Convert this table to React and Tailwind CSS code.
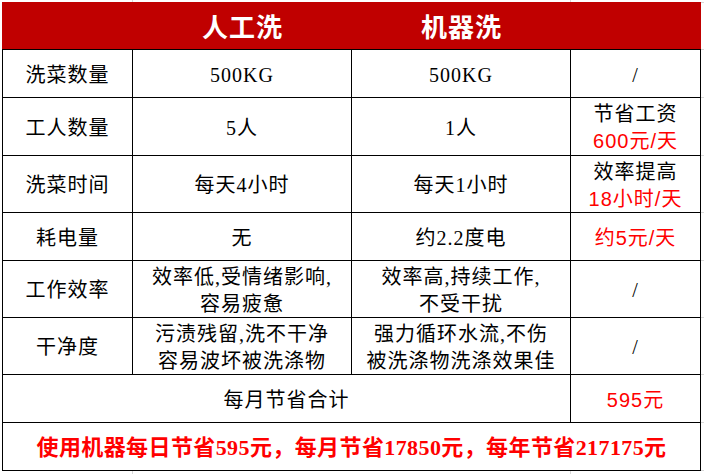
const serif = "font-['Liberation_Serif','Noto_Sans_CJK_SC',serif]";
const sans = "font-['Liberation_Sans','Noto_Sans_CJK_SC',sans-serif]";

const rows = [
  { h: "h-[48px]", label: "洗菜数量", manual: ["500KG"], machine: ["500KG"], save: [{ t: "/" }] },
  { h: "h-[58px]", label: "工人数量", manual: ["5人"], machine: ["1人"], save: [{ t: "节省工资" }, { t: "600元/天", red: true }] },
  { h: "h-[57px]", label: "洗菜时间", manual: ["每天4小时"], machine: ["每天1小时"], save: [{ t: "效率提高" }, { t: "18小时/天", red: true }] },
  { h: "h-[48px]", label: "耗电量", manual: ["无"], machine: ["约2.2度电"], save: [{ t: "约5元/天", red: true }] },
  { h: "h-[57px]", label: "工作效率", manual: ["效率低,受情绪影响,", "容易疲惫"], machine: ["效率高,持续工作,", "不受干扰"], save: [{ t: "/" }] },
  { h: "h-[57px]", label: "干净度", manual: ["污渍残留,洗不干净", "容易波坏被洗涤物"], machine: ["强力循环水流,不伤", "被洗涤物洗涤效果佳"], save: [{ t: "/" }] },
];

const gridY = [2, 49, 97, 155, 212, 260, 317, 374, 422, 470];

function Cell({ h, children }) {
  return (
    <div className={`${h} flex flex-col items-center justify-center border-r border-b border-black pt-[3px] text-[20px] leading-[27px] tracking-[1px] text-black ${serif}`}>
      {children}
    </div>
  );
}

export default function App() {
  return (
    <div className="relative h-[474px] w-[704px] overflow-hidden bg-white">
      {/* faint sheet gridlines outside the table */}
      <div className="absolute left-[132px] top-0 h-[2px] w-px bg-[#d9d9d9]" />
      <div className="absolute left-[570px] top-0 h-[2px] w-px bg-[#d9d9d9]" />
      <div className="absolute left-[132px] top-[471px] h-[3px] w-px bg-[#d9d9d9]" />
      <div className="absolute left-[570px] top-[471px] h-[3px] w-px bg-[#d9d9d9]" />
      {gridY.map((y) => (
        <div key={y} className="absolute left-[701px] h-px w-[3px] bg-[#d9d9d9]" style={{ top: y }} />
      ))}

      <div className="ml-[2px] mt-[2px] w-[699px]">
        <div className={`grid h-[47px] grid-cols-[131px_219px_219px_130px] bg-[#c00000] pt-[6px] text-[26px] font-bold tracking-[1px] text-white ${serif}`}>
          <div />
          <div className="flex items-center justify-center">人工洗</div>
          <div className="flex items-center justify-center">机器洗</div>
          <div />
        </div>

        <div className="grid grid-cols-[130px_219px_219px_130px] border-t border-l border-black">
          {rows.map((r) => (
            <div key={r.label} className="contents">
              <Cell h={r.h}>{r.label}</Cell>
              <Cell h={r.h}>
                {r.manual.map((t) => (
                  <span key={t}>{t}</span>
                ))}
              </Cell>
              <Cell h={r.h}>
                {r.machine.map((t) => (
                  <span key={t}>{t}</span>
                ))}
              </Cell>
              <Cell h={r.h}>
                {r.save.map((s) =>
                  s.red ? (
                    <span key={s.t} className={`text-[#ff0000] ${sans}`}>
                      {s.t}
                    </span>
                  ) : (
                    <span key={s.t}>{s.t}</span>
                  ),
                )}
              </Cell>
            </div>
          ))}

          <div className={`col-span-3 flex h-[48px] items-center justify-center border-r border-b border-black pt-[3px] text-[20px] tracking-[1px] text-black ${serif}`}>
            每月节省合计
          </div>
          <div className={`flex h-[48px] items-center justify-center border-r border-b border-black pt-[3px] text-[20px] tracking-[1px] text-[#ff0000] ${sans}`}>
            595元
          </div>

          <div className={`col-span-4 flex h-[48px] items-center justify-center border-r border-b border-black pt-[2px] text-[22px] font-bold tracking-[0.4px] text-[#ff0000] ${serif}`}>
            使用机器每日节省595元，每月节省17850元，每年节省217175元
          </div>
        </div>
      </div>
    </div>
  );
}
